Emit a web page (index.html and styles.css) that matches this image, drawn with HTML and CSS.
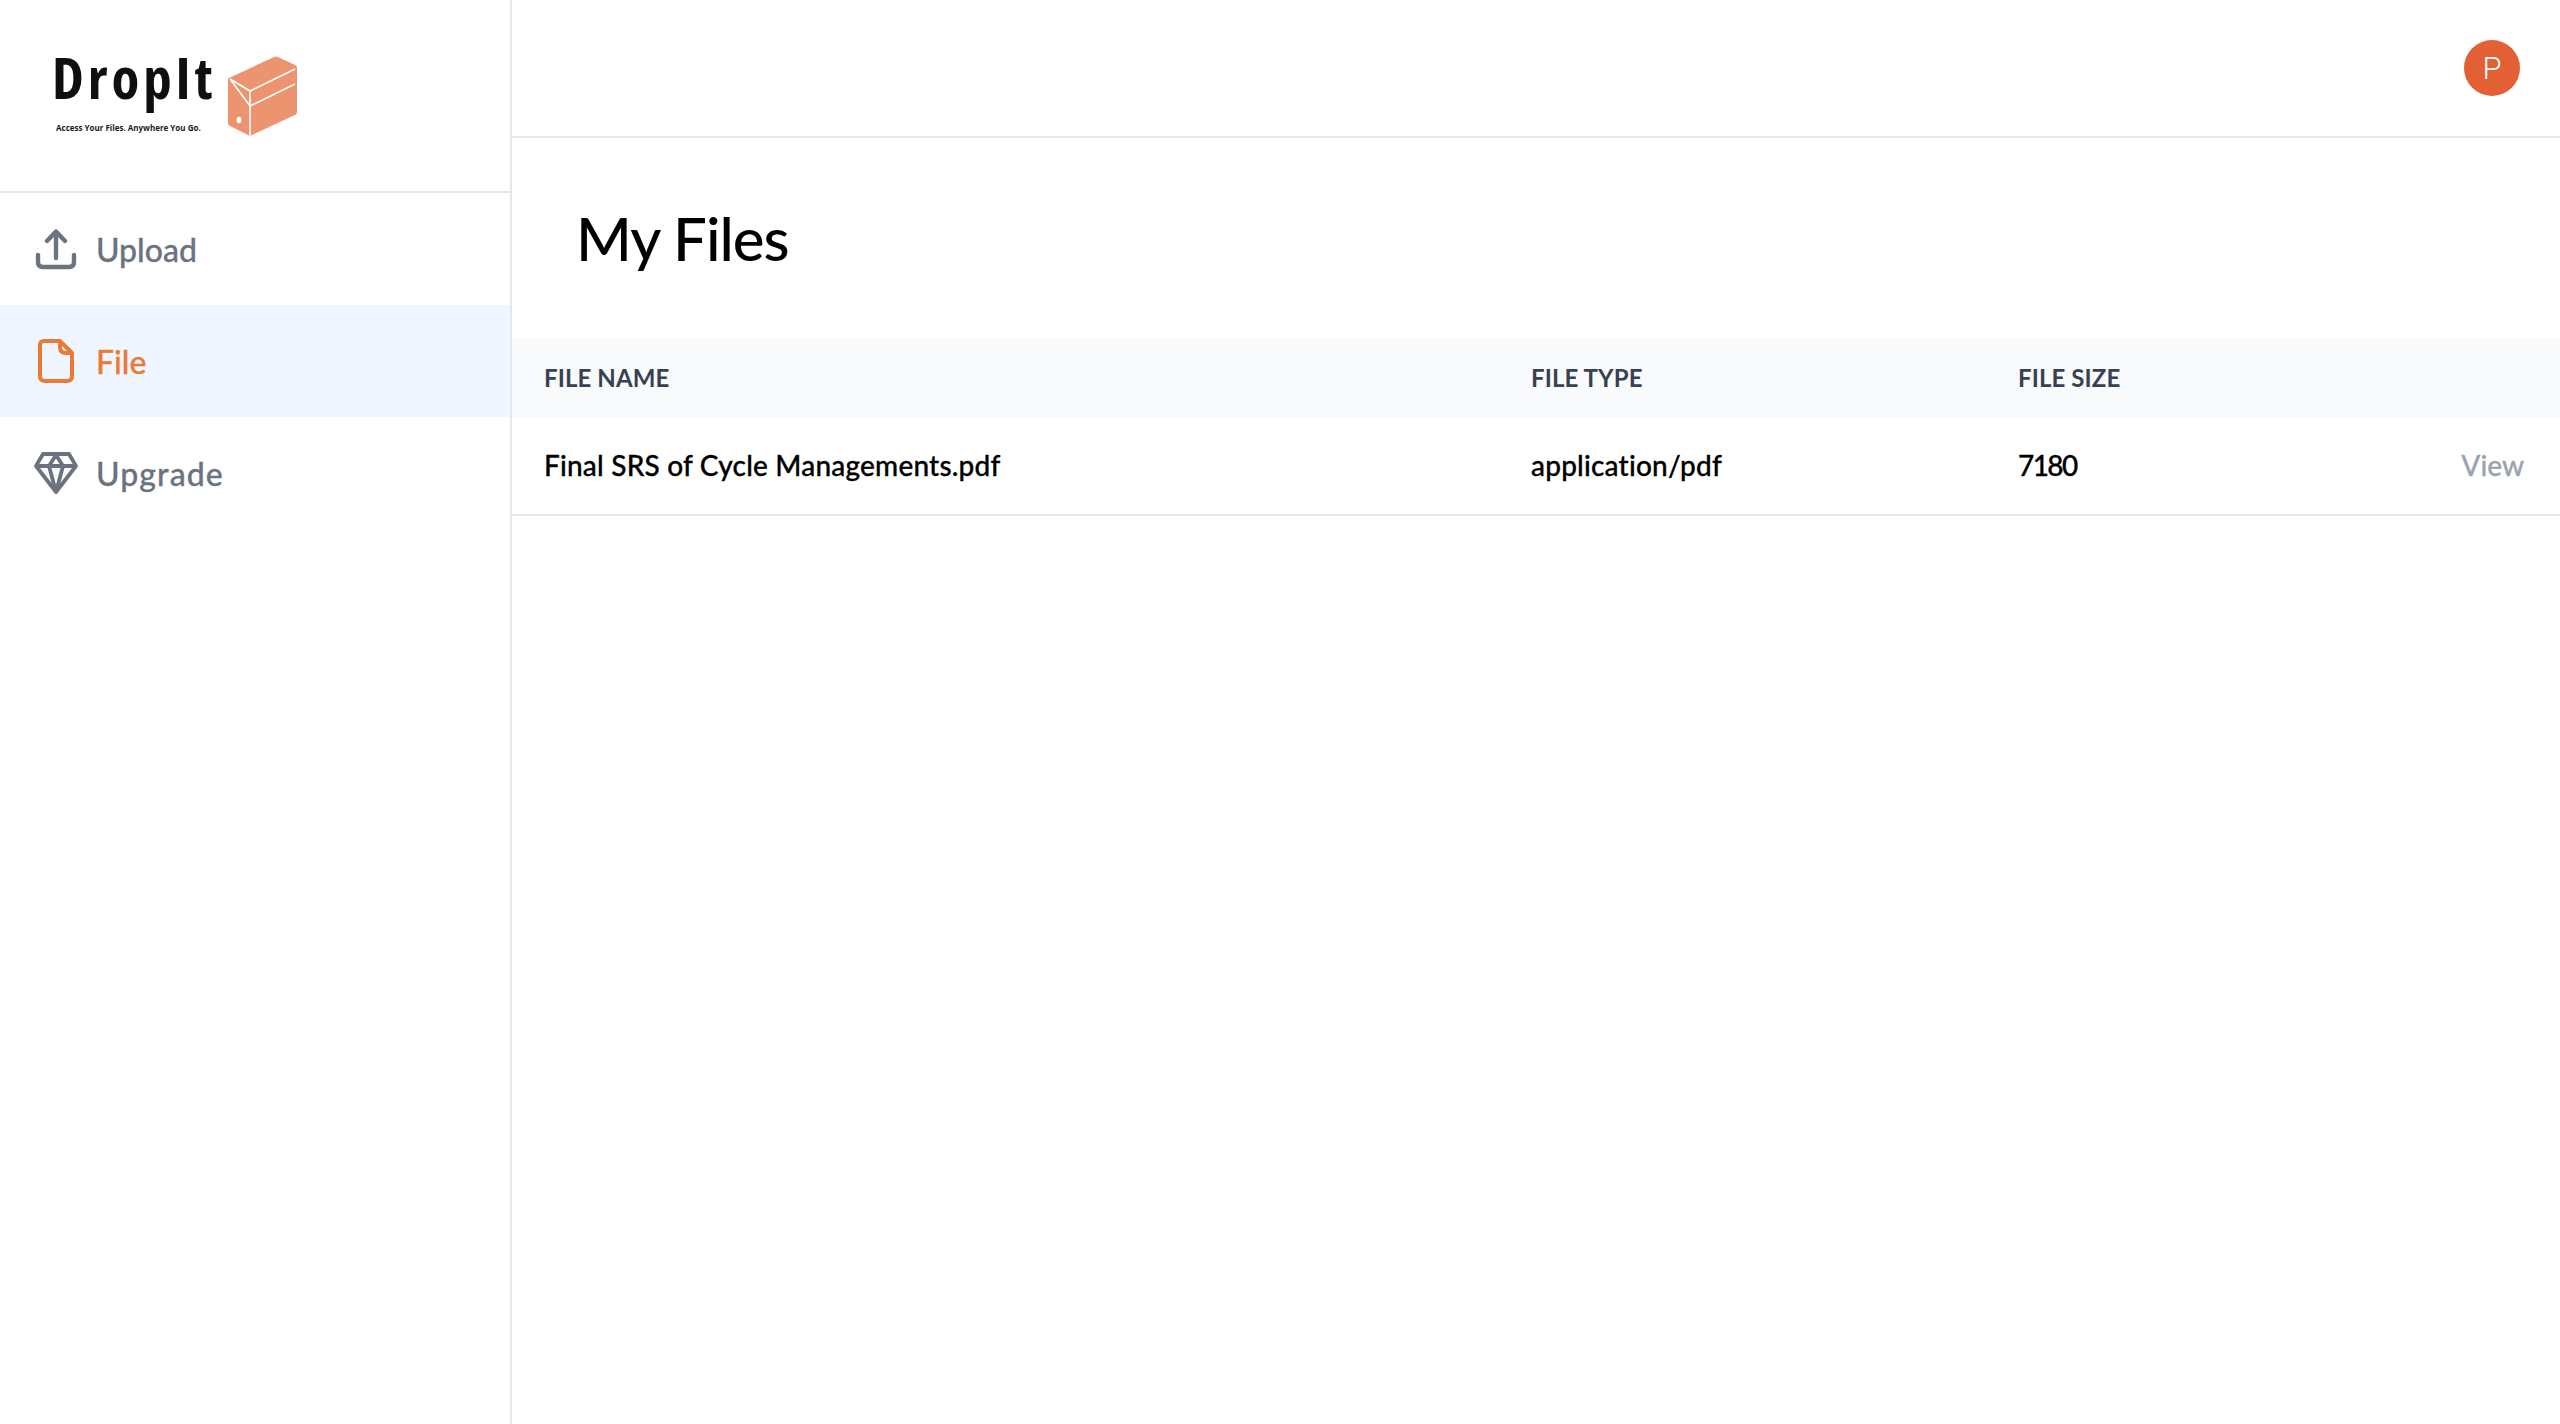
FILE: index.html
```html
<!DOCTYPE html>
<html lang="en">
<head>
<meta charset="utf-8">
<title>DropIt - My Files</title>
<link rel="stylesheet" href="styles.css">
</head>
<body>
<div class="app">
  <aside class="sidebar">
    <div class="logo">
      <div class="logo-words">
        <div class="logo-name">DropIt</div>
        <div class="logo-tag">Access Your Files. Anywhere You Go.</div>
      </div>
      <svg class="logo-box" viewBox="0 0 70 80" width="70" height="80">
        <path d="M1 22 L46 1 Q48 0 50 1 L67 9 Q69 10 69 12 L69 56 Q69 58 67 59 L24 79 Q22 80 20 79 L2 70 Q0 69 0 67 L0 23 Q0 22 1 22Z" fill="#ec9470"/>
        <path d="M2 23 L22 35 L67 13 M22 35 V79 M2 23 L22 50 L67 28" fill="none" stroke="#fff" stroke-width="1.6"/>
        <ellipse cx="11" cy="64" rx="2.4" ry="3.2" fill="#fff"/>
      </svg>
    </div>
    <nav class="nav">
      <a class="nav-item">
        <svg class="nav-icon" viewBox="0 0 44 44" width="44" height="44"><path d="M4 28 V35 Q4 40 9 40 H35 Q40 40 40 35 V28 M22 31 V5 M13 14 L22 4.5 L31 14" fill="none" stroke="currentColor" stroke-width="4.4" stroke-linecap="round" stroke-linejoin="round"/></svg>
        <span>Upload</span>
      </a>
      <a class="nav-item active">
        <svg class="nav-icon" viewBox="0 0 44 44" width="44" height="44"><path d="M10 2 H26 L38 14 V37 Q38 42 33 42 H11 Q6 42 6 37 V6 Q6 2 10 2Z M26 2 V8 Q26 14 32 14 H38" fill="none" stroke="currentColor" stroke-width="4" stroke-linejoin="round"/></svg>
        <span>File</span>
      </a>
      <a class="nav-item">
        <svg class="nav-icon" viewBox="0 0 44 44" width="44" height="44"><path d="M9 3 H35 L42 15 L22 41 L2 15Z M2 15 H42 M15 15 L22 41 L29 15 M15 15 L22 4 L29 15" fill="none" stroke="currentColor" stroke-width="3.8" stroke-linejoin="round"/></svg>
        <span class="wide">Upgrade</span>
      </a>
    </nav>
  </aside>
  <main class="main">
    <header class="topbar">
      <div class="avatar">P</div>
    </header>
    <h1 class="title">My Files</h1>
    <div class="table">
      <div class="row head">
        <div>FILE NAME</div>
        <div>FILE TYPE</div>
        <div>FILE SIZE</div>
        <div></div>
      </div>
      <div class="row body">
        <div>Final SRS of Cycle Managements.pdf</div>
        <div>application/pdf</div>
        <div class="num">7180</div>
        <div class="view">View</div>
      </div>
    </div>
  </main>
</div>
</body>
</html>
```

FILE: styles.css
```css
* { box-sizing: border-box; }
html, body { margin: 0; height: 100%; }
body { font-family: "Lato", "Liberation Sans", sans-serif; background: #fff; color: #000; }
.app { display: flex; height: 1424px; }
.sidebar { width: 512px; flex: none; border-right: 2px solid #e5e7eb; }
.logo { height: 193px; border-bottom: 2px solid #e5e7eb; display: flex; align-items: flex-start; padding: 53px 0 0 52px; }
.logo-words { display: flex; flex-direction: column; width: 176px; flex: none; }
.logo-name { font-family: "Open Sans", sans-serif; font-weight: 700; font-stretch: 87.5%; font-size: 57px; line-height: 48px; height: 69px; color: #0f0f10; letter-spacing: 3.9px; }
.logo-tag { font-family: "Open Sans", sans-serif; font-weight: 700; font-size: 8px; line-height: 12px; color: #1a1a1a; white-space: nowrap; padding-left: 4px; }
.logo-box { margin-top: 3px; flex: none; }
.nav { display: flex; flex-direction: column; }
.nav-item { height: 112px; display: flex; align-items: center; gap: 18px; padding-left: 34px; color: #6b7280; font-size: 32px; font-weight: 500; -webkit-text-stroke: 0.3px currentColor; }
.nav-item.active { background: #eff6ff; color: #ea7a35; }
.nav-icon { flex: none; }
.wide { letter-spacing: 1.1px; }
.main { flex: 1; min-width: 0; display: flex; flex-direction: column; }
.topbar { height: 138px; border-bottom: 2px solid #e5e7eb; display: flex; justify-content: flex-end; align-items: flex-start; padding: 40px 40px 0 0; }
.avatar { width: 56px; height: 56px; border-radius: 50%; background: #e26033; color: #fff; font-size: 31px; display: flex; align-items: center; justify-content: center; font-family: "Roboto", sans-serif; font-weight: 300; }
.title { margin: 0; padding: 0 0 0 64px; height: 200px; display: flex; align-items: center; font-size: 60px; font-weight: 500; letter-spacing: -1px; color: #000; }
.table { display: flex; flex-direction: column; }
.row { display: grid; grid-template-columns: 987px 487px 1fr auto; padding: 0 36px 0 32px; align-items: center; }
.head { height: 79px; background: #f9fafb; color: #374151; font-size: 24px; font-weight: 700; letter-spacing: 0.1px; }
.body { height: 99px; border-bottom: 2px solid #e5e7eb; font-size: 28px; font-weight: 500; letter-spacing: 0.2px; padding-bottom: 2px; -webkit-text-stroke: 0.3px currentColor; }
.num { letter-spacing: -1.6px; }
.view { color: #9ca3af; letter-spacing: 0; }
```
